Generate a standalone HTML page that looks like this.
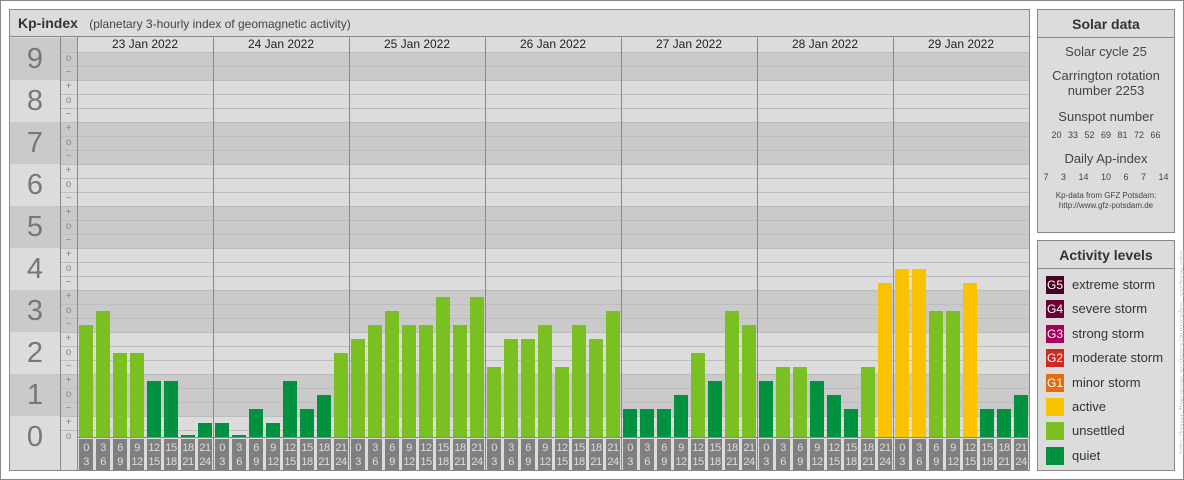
<!DOCTYPE html>
<html><head><meta charset="utf-8"><style>
*{margin:0;padding:0;box-sizing:border-box}
body{width:1184px;height:480px;background:#fff;position:relative;overflow:hidden;font-family:"Liberation Sans",sans-serif;color:#333}
.abs{position:absolute}
#outer{left:0;top:0;width:1184px;height:480px;border:1px solid #888}
#main{left:9px;top:9px;width:1021px;height:462px;border:1px solid #888;background:#dcdcdc}
#title{left:10px;top:10px;width:1019px;height:27px;border-bottom:1px solid #888;background:#dcdcdc;font-size:12px;line-height:26px;padding-left:8px;color:#444}
#title b{font-size:14px;margin-right:8px;color:#333}
#bands{left:10px;top:38px;width:1019px;height:420px;background:repeating-linear-gradient(#cacaca 0 42px,#dcdcdc 42px 84px)}
#hdr{left:77px;top:38px;width:952px;height:14px;background:#dcdcdc;display:flex}
#hdr div{width:136px;text-align:center;font-size:12px;line-height:13px;color:#222}
#lines{left:60px;top:52px;width:969px;height:392px;background:repeating-linear-gradient(transparent 0 0px,#bdbdbd 0 1px,transparent 1px 14px)}
.v{top:37px;width:1px;height:433px;background:#888}
#kp{left:10px;top:38px;width:50px}
#kp div{height:42px;line-height:42px;text-align:center;font-size:29px;color:#777}
#sub{left:60px;top:52px;width:17px}
#sub div{height:14px;line-height:14px;text-align:center;font-size:10px;color:#888}
#bars{left:77px;top:38px;width:952px;height:399px;display:flex;align-items:flex-end}
#bars div{width:14px;margin:0 1px 0 2px}
.q{background:#00923f}.u{background:#7ac022}.a{background:#f9c300}
#tl{left:77px;top:439px;width:952px;height:31px;display:flex}
#tl div{width:14px;margin:0 1px 0 2px;background:#808080;color:#ddd;font-size:11px;line-height:14px;text-align:center;padding-top:2px;letter-spacing:-0.5px}
.box{border:1px solid #888;background:#dcdcdc}
.bt{border-bottom:1px solid #888;height:28px;line-height:28px;text-align:center;font-weight:bold;font-size:14px;color:#333}
.sd{text-align:center;color:#444}
.leg{position:absolute;left:8px;height:18px;font-size:13px;line-height:18px;color:#333}
.leg span{display:inline-block;width:18px;height:18px;color:#fff;font-size:12px;text-align:center;margin-right:8px;vertical-align:top;line-height:18px}
</style></head><body>
<div class="abs" id="outer"></div>
<div class="abs" id="main"></div>
<div class="abs" id="bands"></div>
<div class="abs" style="left:10px;top:458px;width:1019px;height:12px;background:#dcdcdc"></div>
<div class="abs" id="hdr"><div>23 Jan 2022</div><div>24 Jan 2022</div><div>25 Jan 2022</div><div>26 Jan 2022</div><div>27 Jan 2022</div><div>28 Jan 2022</div><div>29 Jan 2022</div></div>
<div class="abs" id="lines"></div>
<div class="abs" id="kp"><div>9</div><div>8</div><div>7</div><div>6</div><div>5</div><div>4</div><div>3</div><div>2</div><div>1</div><div>0</div></div>
<div class="abs" id="sub">
<div>o</div><div>−</div><div>+</div><div>o</div><div>−</div><div>+</div><div>o</div><div>−</div><div>+</div><div>o</div><div>−</div><div>+</div><div>o</div><div>−</div><div>+</div><div>o</div><div>−</div><div>+</div><div>o</div><div>−</div><div>+</div><div>o</div><div>−</div><div>+</div><div>o</div><div>−</div><div>+</div><div>o</div>
</div>
<div class="abs" id="bars">
<div class="u" style="height:112px"></div><div class="u" style="height:126px"></div><div class="u" style="height:84px"></div><div class="u" style="height:84px"></div><div class="q" style="height:56px"></div><div class="q" style="height:56px"></div><div class="q" style="height:2px"></div><div class="q" style="height:14px"></div>
<div class="q" style="height:14px"></div><div class="q" style="height:2px"></div><div class="q" style="height:28px"></div><div class="q" style="height:14px"></div><div class="q" style="height:56px"></div><div class="q" style="height:28px"></div><div class="q" style="height:42px"></div><div class="u" style="height:84px"></div>
<div class="u" style="height:98px"></div><div class="u" style="height:112px"></div><div class="u" style="height:126px"></div><div class="u" style="height:112px"></div><div class="u" style="height:112px"></div><div class="u" style="height:140px"></div><div class="u" style="height:112px"></div><div class="u" style="height:140px"></div>
<div class="u" style="height:70px"></div><div class="u" style="height:98px"></div><div class="u" style="height:98px"></div><div class="u" style="height:112px"></div><div class="u" style="height:70px"></div><div class="u" style="height:112px"></div><div class="u" style="height:98px"></div><div class="u" style="height:126px"></div>
<div class="q" style="height:28px"></div><div class="q" style="height:28px"></div><div class="q" style="height:28px"></div><div class="q" style="height:42px"></div><div class="u" style="height:84px"></div><div class="q" style="height:56px"></div><div class="u" style="height:126px"></div><div class="u" style="height:112px"></div>
<div class="q" style="height:56px"></div><div class="u" style="height:70px"></div><div class="u" style="height:70px"></div><div class="q" style="height:56px"></div><div class="q" style="height:42px"></div><div class="q" style="height:28px"></div><div class="u" style="height:70px"></div><div class="a" style="height:154px"></div>
<div class="a" style="height:168px"></div><div class="a" style="height:168px"></div><div class="u" style="height:126px"></div><div class="u" style="height:126px"></div><div class="a" style="height:154px"></div><div class="q" style="height:28px"></div><div class="q" style="height:28px"></div><div class="q" style="height:42px"></div>
</div>
<div class="abs" id="tl">
<div>0<br>3</div><div>3<br>6</div><div>6<br>9</div><div>9<br>12</div><div>12<br>15</div><div>15<br>18</div><div>18<br>21</div><div>21<br>24</div>
<div>0<br>3</div><div>3<br>6</div><div>6<br>9</div><div>9<br>12</div><div>12<br>15</div><div>15<br>18</div><div>18<br>21</div><div>21<br>24</div>
<div>0<br>3</div><div>3<br>6</div><div>6<br>9</div><div>9<br>12</div><div>12<br>15</div><div>15<br>18</div><div>18<br>21</div><div>21<br>24</div>
<div>0<br>3</div><div>3<br>6</div><div>6<br>9</div><div>9<br>12</div><div>12<br>15</div><div>15<br>18</div><div>18<br>21</div><div>21<br>24</div>
<div>0<br>3</div><div>3<br>6</div><div>6<br>9</div><div>9<br>12</div><div>12<br>15</div><div>15<br>18</div><div>18<br>21</div><div>21<br>24</div>
<div>0<br>3</div><div>3<br>6</div><div>6<br>9</div><div>9<br>12</div><div>12<br>15</div><div>15<br>18</div><div>18<br>21</div><div>21<br>24</div>
<div>0<br>3</div><div>3<br>6</div><div>6<br>9</div><div>9<br>12</div><div>12<br>15</div><div>15<br>18</div><div>18<br>21</div><div>21<br>24</div>
</div>
<div class="abs v" style="left:60px"></div><div class="abs v" style="left:77px"></div>
<div class="abs v" style="left:213px"></div><div class="abs v" style="left:349px"></div><div class="abs v" style="left:485px"></div><div class="abs v" style="left:621px"></div><div class="abs v" style="left:757px"></div><div class="abs v" style="left:893px"></div>
<div class="abs" style="left:77px;top:437px;width:952px;height:1px;background:#888"></div>
<div class="abs" id="title"><b>Kp-index</b> (planetary 3-hourly index of geomagnetic activity)</div>

<div class="abs box" style="left:1037px;top:9px;width:138px;height:224px">
<div class="bt">Solar data</div>
<div class="sd" style="font-size:13px;margin-top:6px">Solar cycle 25</div>
<div class="sd" style="font-size:13px;margin-top:9px;line-height:15px">Carrington rotation<br>number 2253</div>
<div class="sd" style="font-size:13px;margin-top:11px">Sunspot number</div>
<div class="sd" style="font-size:9px;margin-top:6px;word-spacing:4px">20 33 52 69 81 72 66</div>
<div class="sd" style="font-size:13px;margin-top:11px">Daily Ap-index</div>
<div class="sd" style="font-size:9px;margin-top:6px;word-spacing:10px">7 3 14 10 6 7 14</div>
<div class="sd" style="font-size:8px;margin-top:9px;line-height:10px">Kp-data from GFZ Potsdam:<br>http://www.gfz-potsdam.de</div>
</div>
<div class="abs box" style="left:1037px;top:240px;width:138px;height:231px">
<div class="bt">Activity levels</div>
<div class="leg" style="top:35px"><span style="background:#4a0020">G5</span>extreme storm</div>
<div class="leg" style="top:59px"><span style="background:#6b0039">G4</span>severe storm</div>
<div class="leg" style="top:84px"><span style="background:#a5005a">G3</span>strong storm</div>
<div class="leg" style="top:108px"><span style="background:#d2281e">G2</span>moderate storm</div>
<div class="leg" style="top:133px"><span style="background:#e36e12">G1</span>minor storm</div>
<div class="leg" style="top:157px"><span style="background:#f9c300"></span>active</div>
<div class="leg" style="top:181px"><span style="background:#7ac022"></span>unsettled</div>
<div class="leg" style="top:206px"><span style="background:#00923f"></span>quiet</div>
</div>
<div class="abs" style="left:1177px;top:470px;transform-origin:0 0;transform:rotate(-90deg);font-size:9px;color:#ccc;white-space:nowrap;width:220px;text-align:right">http://www.fheusner.eu/terra/aurora/kp_archive.php</div>
</body></html>
